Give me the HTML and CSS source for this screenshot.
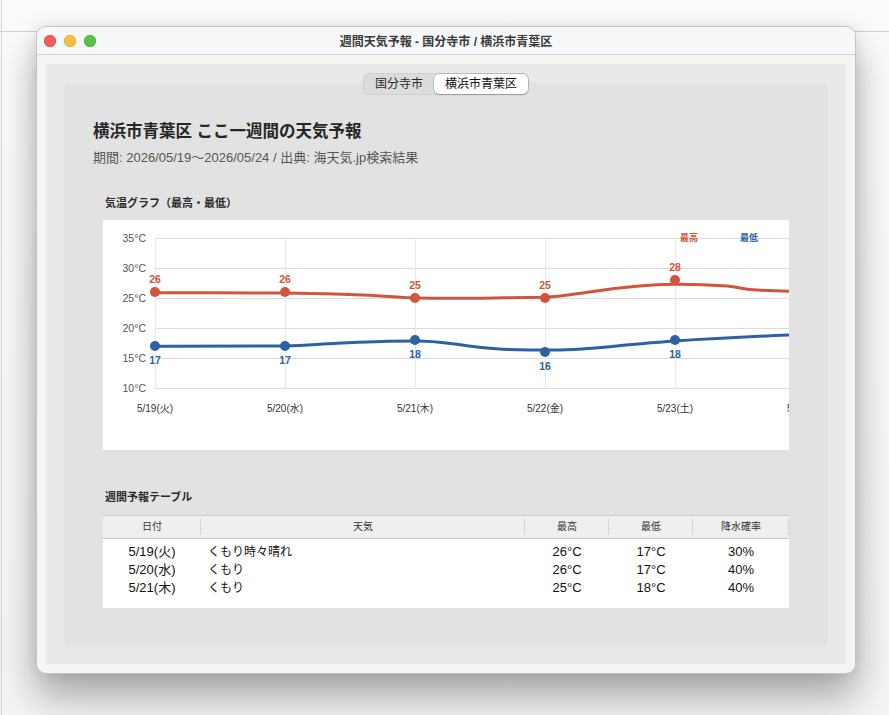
FILE: index.html
```html
<!DOCTYPE html>
<html lang="ja">
<head>
<meta charset="utf-8">
<title>週間天気予報</title>
<link rel="stylesheet" href="styles.css">
</head>
<body>
<div class="window">
  <div class="titlebar">
    <div class="lights">
      <span class="light red"></span>
      <span class="light yellow"></span>
      <span class="light green"></span>
    </div>
    <div class="title">週間天気予報 - 国分寺市 / 横浜市青葉区</div>
    <div></div>
  </div>
  <div class="content">
    <div class="tabview">
      <div class="segmented">
        <span class="seg">国分寺市</span>
        <span class="seg active">横浜市青葉区</span>
      </div>
      <div class="card">
        <div class="intro">
          <h1>横浜市青葉区 ここ一週間の天気予報</h1>
          <p class="sub">期間: 2026/05/19～2026/05/24 / 出典: 海天気.jp検索結果</p>
        </div>
        <section class="block chart-block">
          <h2>気温グラフ（最高・最低）</h2>
          <div class="chart">
            <svg width="686" height="230" viewBox="0 0 686 230">
              <g class="grid-h">
                <line x1="52" y1="18.5" x2="686" y2="18.5"/>
                <line x1="52" y1="48.5" x2="686" y2="48.5"/>
                <line x1="52" y1="78.5" x2="686" y2="78.5"/>
                <line x1="52" y1="108.5" x2="686" y2="108.5"/>
                <line x1="52" y1="138.5" x2="686" y2="138.5"/>
                <line x1="52" y1="168.5" x2="686" y2="168.5"/>
              </g>
              <g class="grid-v">
                <line x1="52.5" y1="18" x2="52.5" y2="169"/>
                <line x1="182.5" y1="18" x2="182.5" y2="169"/>
                <line x1="312.5" y1="18" x2="312.5" y2="169"/>
                <line x1="442.5" y1="18" x2="442.5" y2="169"/>
                <line x1="572.5" y1="18" x2="572.5" y2="169"/>
              </g>
              <g class="ylab">
                <text x="43" y="18">35°C</text>
                <text x="43" y="48">30°C</text>
                <text x="43" y="78">25°C</text>
                <text x="43" y="108">20°C</text>
                <text x="43" y="138">15°C</text>
                <text x="43" y="168">10°C</text>
              </g>
              <g class="xlab">
                <text x="52" y="188">5/19(火)</text>
                <text x="182" y="188">5/20(水)</text>
                <text x="312" y="188">5/21(木)</text>
                <text x="442" y="188">5/22(金)</text>
                <text x="572" y="188">5/23(土)</text>
                <text x="702" y="188">5/24(日)</text>
              </g>
              <path class="line hi" d="M52,72.7 C90,72.7 150,72.8 182,73 C215,73.3 240,74.5 260,75 C285,76 300,78 313,78 C340,78.3 380,78.2 404,77.7 C425,77.4 435,77.4 442,77.3 C460,76.5 475,73.5 490,71.5 C510,68.5 545,64.5 572,64.3 C595,64.2 610,65 624,66 C635,67 640,69 650,69.8 C665,70.8 675,71 690,71.2"/>
              <path class="line lo" d="M52,126.3 C100,126.2 150,126.1 182,126 C205,125.9 215,124 235,123.3 C255,122.6 265,121.5 285,121.2 C300,121 305,121 313,121 C330,121 340,122.5 350,123.8 C365,126 380,128.3 400,129.2 C420,130 435,130 457,130 C470,130 480,129 495,127.8 C520,125.3 550,122.5 572,121 C610,118.5 650,116.5 690,114.8"/>
              <g class="dot hi">
                <circle cx="52" cy="72" r="5"/>
                <circle cx="182" cy="72" r="5"/>
                <circle cx="312" cy="78" r="5"/>
                <circle cx="442" cy="78" r="5"/>
                <circle cx="572" cy="60" r="5"/>
              </g>
              <g class="dot lo">
                <circle cx="52" cy="126" r="5"/>
                <circle cx="182" cy="126" r="5"/>
                <circle cx="312" cy="120" r="5"/>
                <circle cx="442" cy="132" r="5"/>
                <circle cx="572" cy="120" r="5"/>
              </g>
              <g class="vlab hi">
                <text x="52" y="59">26</text>
                <text x="182" y="59">26</text>
                <text x="312" y="65">25</text>
                <text x="442" y="65">25</text>
                <text x="572" y="47">28</text>
              </g>
              <g class="vlab lo">
                <text x="52" y="140">17</text>
                <text x="182" y="140">17</text>
                <text x="312" y="134">18</text>
                <text x="442" y="146">16</text>
                <text x="572" y="134">18</text>
              </g>
              <text class="legend hi" x="577" y="17">最高</text>
              <text class="legend lo" x="637" y="17">最低</text>
            </svg>
          </div>
        </section>
        <section class="block table-block">
          <h2>週間予報テーブル</h2>
          <div class="table">
            <div class="thead">
              <div class="th">日付</div>
              <div class="th">天気</div>
              <div class="th">最高</div>
              <div class="th">最低</div>
              <div class="th">降水確率</div>
            </div>
            <div class="tbody">
              <div class="tr">
                <div class="td">5/19(火)</div>
                <div class="td wx">くもり時々晴れ</div>
                <div class="td">26°C</div>
                <div class="td">17°C</div>
                <div class="td">30%</div>
              </div>
              <div class="tr">
                <div class="td">5/20(水)</div>
                <div class="td wx">くもり</div>
                <div class="td">26°C</div>
                <div class="td">17°C</div>
                <div class="td">40%</div>
              </div>
              <div class="tr">
                <div class="td">5/21(木)</div>
                <div class="td wx">くもり</div>
                <div class="td">25°C</div>
                <div class="td">18°C</div>
                <div class="td">40%</div>
              </div>
            </div>
          </div>
        </section>
      </div>
    </div>
  </div>
</div>
</body>
</html>
```

FILE: styles.css
```css
* { box-sizing: border-box; }

html, body { height: 100%; }

body {
  margin: 0;
  padding: 26px 0 0 36px;
  font-family: "Liberation Sans", "Noto Sans CJK JP", sans-serif;
  color: #222;
  background:
    linear-gradient(#d2d2d2, #d2d2d2) 1px 0 / 1px 100% no-repeat,
    linear-gradient(#d2d2d2, #d2d2d2) 0 31px / 100% 1px no-repeat,
    linear-gradient(#fbfbfb, #f4f4f4);
  overflow: hidden;
}

.window {
  width: 820px;
  height: 648px;
  border: 1px solid #c2c2c2;
  border-radius: 10px;
  background: #f5f5f3;
  overflow: hidden;
  box-shadow: 0 22px 38px rgba(0, 0, 0, 0.33), 0 0 14px rgba(0, 0, 0, 0.08);
}

.titlebar {
  height: 28px;
  background: #f6f7f9;
  border-bottom: 1px solid #d3d3d3;
  display: grid;
  grid-template-columns: 1fr auto 1fr;
  align-items: center;
}

.lights {
  display: flex;
  gap: 8px;
  padding-left: 7px;
}

.light {
  width: 12px;
  height: 12px;
  border-radius: 50%;
}
.light.red { background: #ee5f57; box-shadow: inset 0 0 0 0.5px #d9473f; }
.light.yellow { background: #f6bd42; box-shadow: inset 0 0 0 0.5px #dba232; }
.light.green { background: #5cc148; box-shadow: inset 0 0 0 0.5px #47a537; }

.title {
  font-size: 12px;
  font-weight: bold;
  color: #3b3b3b;
  white-space: nowrap;
}

.content {
  padding: 9px;
}

.tabview {
  height: 600px;
  background: #e9e9e9;
  padding: 0 18px 17px;
  display: flex;
  flex-direction: column;
}

.segmented {
  position: relative;
  z-index: 1;
  align-self: center;
  margin-top: 9px;
  height: 22px;
  display: flex;
  background: #dcdcdc;
  border: 1px solid #d0d0d0;
  border-radius: 6px;
}

.seg {
  font-size: 12px;
  line-height: 20px;
  padding: 0 11px;
  color: #2a2a2a;
  white-space: nowrap;
}

.seg.active {
  background: #fff;
  border-radius: 5px;
  box-shadow: 0 0 0 0.5px rgba(0, 0, 0, 0.22), 0 1px 1.5px rgba(0, 0, 0, 0.18);
  color: #111;
}

.card {
  margin-top: -12px;
  flex: 1;
  background: #e2e2e2;
  border-radius: 5px;
  padding: 36px 39px 0;
}

.intro {
  margin-left: -10px;
}

h1 {
  margin: 0;
  font-size: 16.5px;
  line-height: 24px;
  font-weight: bold;
  color: #262626;
  white-space: nowrap;
}

.sub {
  margin: 6px 0 0;
  font-size: 13px;
  line-height: 18px;
  color: #555;
  white-space: nowrap;
}

.block h2 {
  margin: 0 0 9px 2px;
  font-size: 11px;
  line-height: 16px;
  font-weight: bold;
  color: #2a2a2a;
}

.chart-block { margin-top: 28px; }
.table-block { margin-top: 39px; }
.table-block h2 { margin-bottom: 10px; }

.chart {
  width: 686px;
  height: 230px;
  background: #fff;
  overflow: hidden;
}

.chart svg { display: block; }

.grid-h line { stroke: #dddddd; stroke-width: 1; }
.grid-v line { stroke: #e8e8e8; stroke-width: 1; }

.ylab text {
  font-family: "Liberation Sans", sans-serif;
  font-size: 10.5px;
  fill: #555;
  text-anchor: end;
  dominant-baseline: central;
}

.xlab text {
  font-family: "Liberation Sans", "Noto Sans CJK JP", sans-serif;
  font-size: 10px;
  fill: #333;
  text-anchor: middle;
  dominant-baseline: central;
}

.line {
  fill: none;
  stroke-width: 3;
  stroke-linecap: round;
  stroke-linejoin: round;
}
.line.hi { stroke: #d0553c; }
.line.lo { stroke: #2d60a6; }

.dot.hi circle { fill: #d0553c; }
.dot.lo circle { fill: #2d60a6; }

.vlab text {
  font-family: "Liberation Sans", sans-serif;
  font-size: 10.5px;
  font-weight: bold;
  text-anchor: middle;
  dominant-baseline: central;
}
.vlab.hi text { fill: #d0553c; }
.vlab.lo text { fill: #2d60a6; }

.legend {
  font-family: "Noto Sans CJK JP", sans-serif;
  font-size: 9px;
  font-weight: bold;
  dominant-baseline: central;
}
.legend.hi { fill: #d0553c; }
.legend.lo { fill: #2d60a6; }

.table {
  width: 686px;
}

.thead,
.tr {
  display: grid;
  grid-template-columns: 98px 324px 84px 84px 96px;
}

.thead {
  height: 24px;
  background: #efefef;
  border-top: 1px solid #c9c9c9;
  border-bottom: 1px solid #c9c9c9;
}

.th {
  position: relative;
  font-size: 10px;
  line-height: 22px;
  text-align: center;
  color: #333;
}

.th::after {
  content: "";
  position: absolute;
  right: 0;
  top: 3px;
  bottom: 3px;
  width: 1px;
  background: #d6d6d6;
}

.tbody {
  background: #fff;
  padding: 4px 0 11px;
}

.td {
  font-size: 13px;
  line-height: 18px;
  text-align: center;
  color: #111;
  white-space: nowrap;
}

.td.wx {
  text-align: left;
  padding-left: 7px;
  font-size: 12px;
}
```
